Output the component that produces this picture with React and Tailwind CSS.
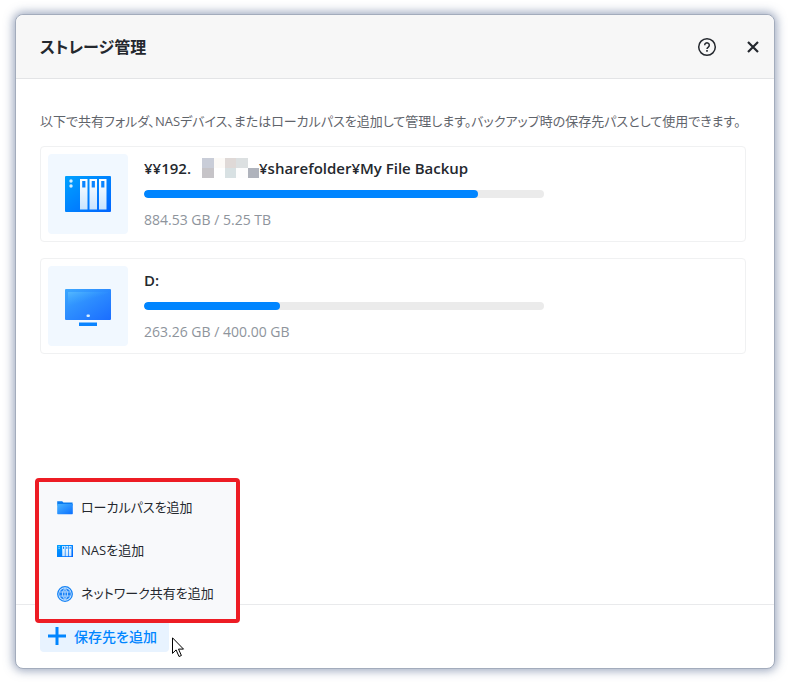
import { useState } from "react";

// storages shown in the list
const storages = [
  { id: 1, type: "nas", used: "884.53 GB", total: "5.25 TB", percent: 83.5 },
  { id: 2, type: "local", name: "D:", used: "263.26 GB", total: "400.00 GB", percent: 34 },
];

// colors of the masked part of the address
const maskCells = [
  "bg-transparent", "bg-[#c9cdd8]", "bg-[#fcfaf7]", "bg-[#dfd9d7]", "bg-[#dce0e1]", "bg-white",
  "bg-transparent", "bg-[#c6c4c8]", "bg-white", "bg-[#d8e1e3]", "bg-[#fdfdfd]", "bg-[#afb3bc]",
];

function NasIcon({ id, className }) {
  return (
    <svg className={className} viewBox="0 0 46 36" preserveAspectRatio="none" aria-hidden="true">
      <defs>
        <linearGradient id={id} x1="0" y1="0" x2="1" y2="1">
          <stop offset="0" stopColor="#00a2ff" />
          <stop offset="1" stopColor="#0064ff" />
        </linearGradient>
        <linearGradient id={`${id}-bay`} x1="0" y1="0" x2="0" y2="1">
          <stop offset="0" stopColor="#fff" />
          <stop offset="1" stopColor="#c9e4ff" />
        </linearGradient>
      </defs>
      <rect width="46" height="36" rx="1" fill={`url(#${id})`} />
      <circle cx="6" cy="5" r="1.7" fill="#d5efff" />
      <circle cx="6" cy="10" r="1.7" fill="#d5efff" />
      {[15, 24.5, 34].map((x) => (
        <g key={x}>
          <rect x={x} y="3" width="7.5" height="30.5" fill={`url(#${id}-bay)`} />
          <rect x={x + 2.2} y="5" width="3.2" height="6.5" fill="#0a84ff" />
        </g>
      ))}
    </svg>
  );
}

function MonitorIcon({ className }) {
  return (
    <svg className={className} viewBox="0 0 46 37" aria-hidden="true">
      <defs>
        <linearGradient id="screen" x1="0" y1="0" x2="1" y2="1">
          <stop offset="0" stopColor="#3da8ff" />
          <stop offset="1" stopColor="#1a6dff" />
        </linearGradient>
        <linearGradient id="shine" x1="0" y1="0" x2="0.6" y2="1">
          <stop offset="0" stopColor="#5bbcff" stopOpacity="0.8" />
          <stop offset="0.5" stopColor="#3da8ff" stopOpacity="0" />
        </linearGradient>
      </defs>
      <rect width="46" height="31" rx="1" fill="url(#screen)" />
      <rect x="3" y="3" width="40" height="22" fill="url(#shine)" />
      <rect x="21.5" y="25.5" width="3.4" height="2.4" rx="1" fill="#d9efff" />
      <rect x="14" y="33.5" width="18" height="3.5" fill="#0a84ff" />
    </svg>
  );
}

function FolderIcon() {
  return (
    <svg className="w-4 h-4 shrink-0" viewBox="0 0 16 16" aria-hidden="true">
      <defs>
        <linearGradient id="folder" x1="0" y1="0" x2="1" y2="1">
          <stop offset="0" stopColor="#49b4ff" />
          <stop offset="1" stopColor="#0a6fff" />
        </linearGradient>
      </defs>
      <path d="M0.2 1.2h5l1.2 1.4h9.2v3H0.2z" fill="#0a7cf0" />
      <path d="M0.2 4h15.6v9.6a.6.6 0 0 1-.6.6H.8a.6.6 0 0 1-.6-.6z" fill="url(#folder)" />
    </svg>
  );
}

function GlobeIcon() {
  return (
    <svg className="w-4 h-4 shrink-0" viewBox="0 0 16 16" fill="none" aria-hidden="true">
      <circle cx="8" cy="8" r="7.3" fill="#d3eaff" stroke="#1683f5" strokeWidth="1.3" />
      <circle cx="8" cy="8" r="5.8" fill="#1a82f7" />
      <path
        d="M8 2.2v11.6M2.8 6h10.4M2.8 10h10.4M8 2.4c-3.4 3-3.4 8.2 0 11.2M8 2.4c3.4 3 3.4 8.2 0 11.2"
        stroke="#e3f2ff"
        strokeWidth="0.7"
      />
    </svg>
  );
}

const menuItems = [
  { label: "ローカルパスを追加", icon: <FolderIcon /> },
  { label: "NASを追加", icon: <NasIcon id="nas-small" className="w-4 h-3 shrink-0" /> },
  { label: "ネットワーク共有を追加", icon: <GlobeIcon /> },
];

function StorageCard({ storage }) {
  return (
    <li className="flex items-center gap-4 p-[7px] border border-[#f0f1f2] rounded-sm">
      <div className="w-20 h-20 shrink-0 flex items-center justify-center rounded-sm bg-[#f1f8ff]">
        {storage.type === "nas" ? (
          <NasIcon id="nas-large" className="w-[46px] h-9" />
        ) : (
          <MonitorIcon className="w-[46px] h-[37px] mt-0.5" />
        )}
      </div>

      <div className="flex-1 min-w-0">
        <h2 className="flex items-center h-5 text-[15px] font-semibold text-[#24282e] whitespace-nowrap">
          {storage.type === "nas" ? (
            <>
              <span>¥¥192.</span>
              <span className="grid grid-cols-6 w-[68px] h-5">
                {maskCells.map((cell, i) => (
                  <span key={i} className={cell}></span>
                ))}
              </span>
              <span>¥sharefolder¥My File Backup</span>
            </>
          ) : (
            storage.name
          )}
        </h2>

        {/* Usage bar */}
        <div className="max-w-[400px] h-2 mt-3 rounded-full bg-[#ebebeb] overflow-hidden">
          <div className="h-full rounded-full bg-[#0085ff]" style={{ width: `${storage.percent}%` }}></div>
        </div>

        <p className="mt-3 text-[14px] leading-5 text-[#8e949c]">
          {storage.used} / {storage.total}
        </p>
      </div>
    </li>
  );
}

function App() {
  const [menuOpen, setMenuOpen] = useState(true);

  return (
    <div className="min-h-screen flex px-[15px] pt-[14px] pb-[15px] bg-white font-['Open_Sans','Noto_Sans_CJK_JP',sans-serif] [font-feature-settings:'palt']">
      <main className="flex-1 min-w-0 flex flex-col bg-white border border-[#a3acbc] rounded-lg shadow-[0_0_10px_2px_rgba(80,100,140,0.55)]">
        {/* Header */}
        <header className="flex items-center justify-between h-16 pl-6 pr-3 border-b border-[#e3e4e6] bg-[#f7f7f7] rounded-t-lg">
          <h1 className="text-[16px] font-bold text-[#24282e]">ストレージ管理</h1>
          <div className="flex items-center gap-[30px] text-[#24282e]">
            <button type="button" aria-label="ヘルプ" className="cursor-pointer">
              <svg className="w-5 h-5" viewBox="0 0 20 20" fill="none" stroke="currentColor">
                <circle cx="10" cy="10" r="8.3" strokeWidth="1.5" />
                <path d="M7.7 8.2a2.3 2.3 0 1 1 3.6 1.9c-.9.6-1.3.9-1.3 1.9" strokeWidth="1.5" />
                <path d="M10 13v1.7" strokeWidth="1.6" />
              </svg>
            </button>
            <button type="button" aria-label="閉じる" className="mr-[3px] cursor-pointer">
              <svg className="w-3 h-3" viewBox="0 0 12 12" fill="none" stroke="currentColor" strokeWidth="2.2">
                <path d="M1 1l10 10M11 1L1 11" />
              </svg>
            </button>
          </div>
        </header>

        {/* Storage list */}
        <section className="flex-1 pl-6 pr-7 pt-8">
          <p className="text-[13px] leading-5 text-[#5f646b]">
            以下で共有フォルダ、NASデバイス、またはローカルパスを追加して管理します。バックアップ時の保存先パスとして使用できます。
          </p>
          <ul className="flex flex-col gap-4 mt-[15px]">
            {storages.map((s) => (
              <StorageCard key={s.id} storage={s} />
            ))}
          </ul>
        </section>

        {/* Footer */}
        <footer className="flex items-start h-16 px-6 pt-[15px] border-t border-[#e9eaec]">
          <div className="relative">
            <button
              type="button"
              onClick={() => setMenuOpen(!menuOpen)}
              className="flex items-center gap-2 h-8 pl-2 pr-3 rounded-sm bg-[#e8f3ff] text-[14px] font-medium text-[#0085ff] whitespace-nowrap cursor-pointer">
              <svg className="w-[18px] h-[18px]" viewBox="0 0 18 18" stroke="currentColor" strokeWidth="3">
                <path d="M9 0v18M0 9h18" />
              </svg>
              保存先を追加
            </button>

            {menuOpen && (
              <div className="absolute -left-[5px] bottom-[29px] w-[205px] border-4 border-[#ed1c24] rounded-sm bg-[#f8f9fb] py-1">
                {menuItems.map((item) => (
                  <button
                    key={item.label}
                    type="button"
                    className="flex items-center gap-2 w-full h-[43px] px-[18px] text-[13px] text-[#24282e] whitespace-nowrap cursor-pointer">
                    {item.icon}
                    {item.label}
                  </button>
                ))}
              </div>
            )}

            {/* Pointer */}
            <svg className="absolute left-[132px] top-[17px] w-[13px] h-[21px]" viewBox="0 0 13 21" aria-hidden="true">
              <path
                d="M.5 .8v15.6l3.6-3.5 2.9 6.6 2.4-1-2.9-6.4h5z"
                fill="#fff"
                stroke="#000"
                strokeWidth="1"
              />
            </svg>
          </div>
        </footer>
      </main>
    </div>
  );
}

export default App;
